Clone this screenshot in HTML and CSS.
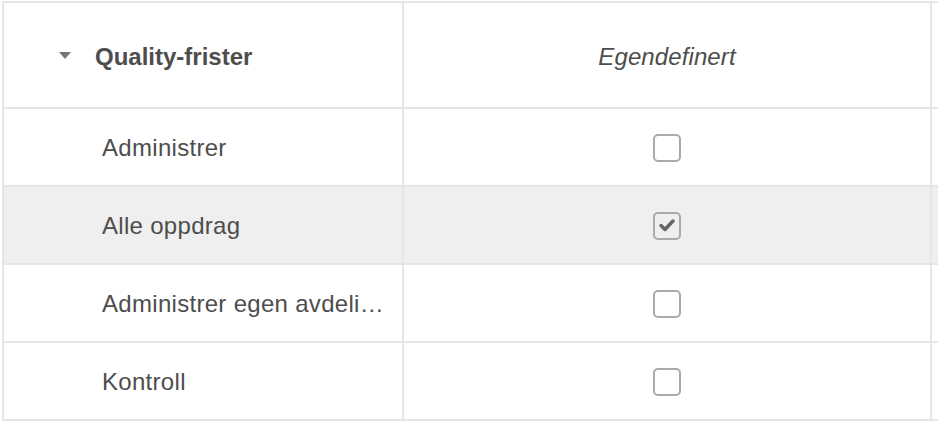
FILE: index.html
```html
<!DOCTYPE html>
<html lang="no">
<head>
    <meta charset="UTF-8">
    <meta name="viewport" content="width=device-width, initial-scale=1.0">
    <title>Roller</title>
    <link rel="stylesheet" href="styles.css">
</head>
<body>

<div class="grid-wrap">
    <table class="perm-table">
        <tr class="group-row">
            <td class="name-cell">
                <div class="group-head">
                    <span class="caret"></span>
                    <span class="group-title">Quality-frister</span>
                </div>
            </td>
            <td class="role-cell"><em>Egendefinert</em></td>
            <td class="extra-cell"></td>
        </tr>
        <tr>
            <td class="name-cell"><span class="perm-name">Administrer</span></td>
            <td class="role-cell"><span class="check"></span></td>
            <td class="extra-cell"></td>
        </tr>
        <tr class="hover">
            <td class="name-cell"><span class="perm-name">Alle oppdrag</span></td>
            <td class="role-cell">
                <span class="check checked">
                    <svg width="28" height="28" viewBox="0 0 28 28"><path d="M8 13.5l4 4 8-8.5" fill="none" stroke="#666" stroke-width="3.5" stroke-linecap="round" stroke-linejoin="round"/></svg>
                </span>
            </td>
            <td class="extra-cell"></td>
        </tr>
        <tr>
            <td class="name-cell"><span class="perm-name">Administrer egen avdeling</span></td>
            <td class="role-cell"><span class="check"></span></td>
            <td class="extra-cell"></td>
        </tr>
        <tr>
            <td class="name-cell"><span class="perm-name">Kontroll</span></td>
            <td class="role-cell"><span class="check"></span></td>
            <td class="extra-cell"></td>
        </tr>
    </table>
</div>

</body>
</html>
```

FILE: styles.css
```css
/* page */
body {
    margin: 0;
    background-color: #fff;
    font-family: "Liberation Sans", Arial, sans-serif;
    color: #4d4d4d;
    overflow: hidden;
}
.grid-wrap {
    padding: 1px 0 0 2px;
}
/* permission table */
.perm-table {
    border-collapse: separate;
    border-spacing: 0;
    border-top: 2px solid #e6e6e6;
    border-left: 2px solid #e6e6e6;
    table-layout: fixed;
    width: 1000px;
}
.perm-table td {
    border-right: 2px solid #e6e6e6;
    border-bottom: 2px solid #e6e6e6;
    height: 78px;
    padding: 1px 0 0 0;
    box-sizing: border-box;
    font-size: 24px;
    letter-spacing: 0.3px;
    vertical-align: middle;
}
.perm-table .group-row td {
    height: 106px;
    padding-top: 4px;
    letter-spacing: 0.1px;
}
.perm-table td.name-cell {
    width: 400px;
    padding-left: 98px;
    padding-right: 13px;
}
.perm-table .group-row td.name-cell {
    padding-left: 55px;
}
.name-cell .perm-name {
    display: block;
    max-width: 282px;
    white-space: nowrap;
    overflow: hidden;
    text-overflow: ellipsis;
}
.role-cell {
    width: 528px;
    text-align: center;
}
.hover td {
    background-color: #efefef;
}
/* group header */
.group-head {
    display: flex;
    align-items: center;
    gap: 24px;
}
.caret {
    width: 0;
    height: 0;
    border-left: 6px solid transparent;
    border-right: 6px solid transparent;
    border-top: 7px solid #777;
    margin-top: -4px;
}
.group-title {
    font-weight: bold;
    letter-spacing: 0;
}
/* checkbox */
.check {
    display: inline-block;
    width: 28px;
    height: 28px;
    box-sizing: border-box;
    border: 2px solid #aaa;
    border-radius: 5px;
    vertical-align: middle;
    position: relative;
}
.check svg {
    position: absolute;
    left: -2px;
    top: -2px;
}
```
